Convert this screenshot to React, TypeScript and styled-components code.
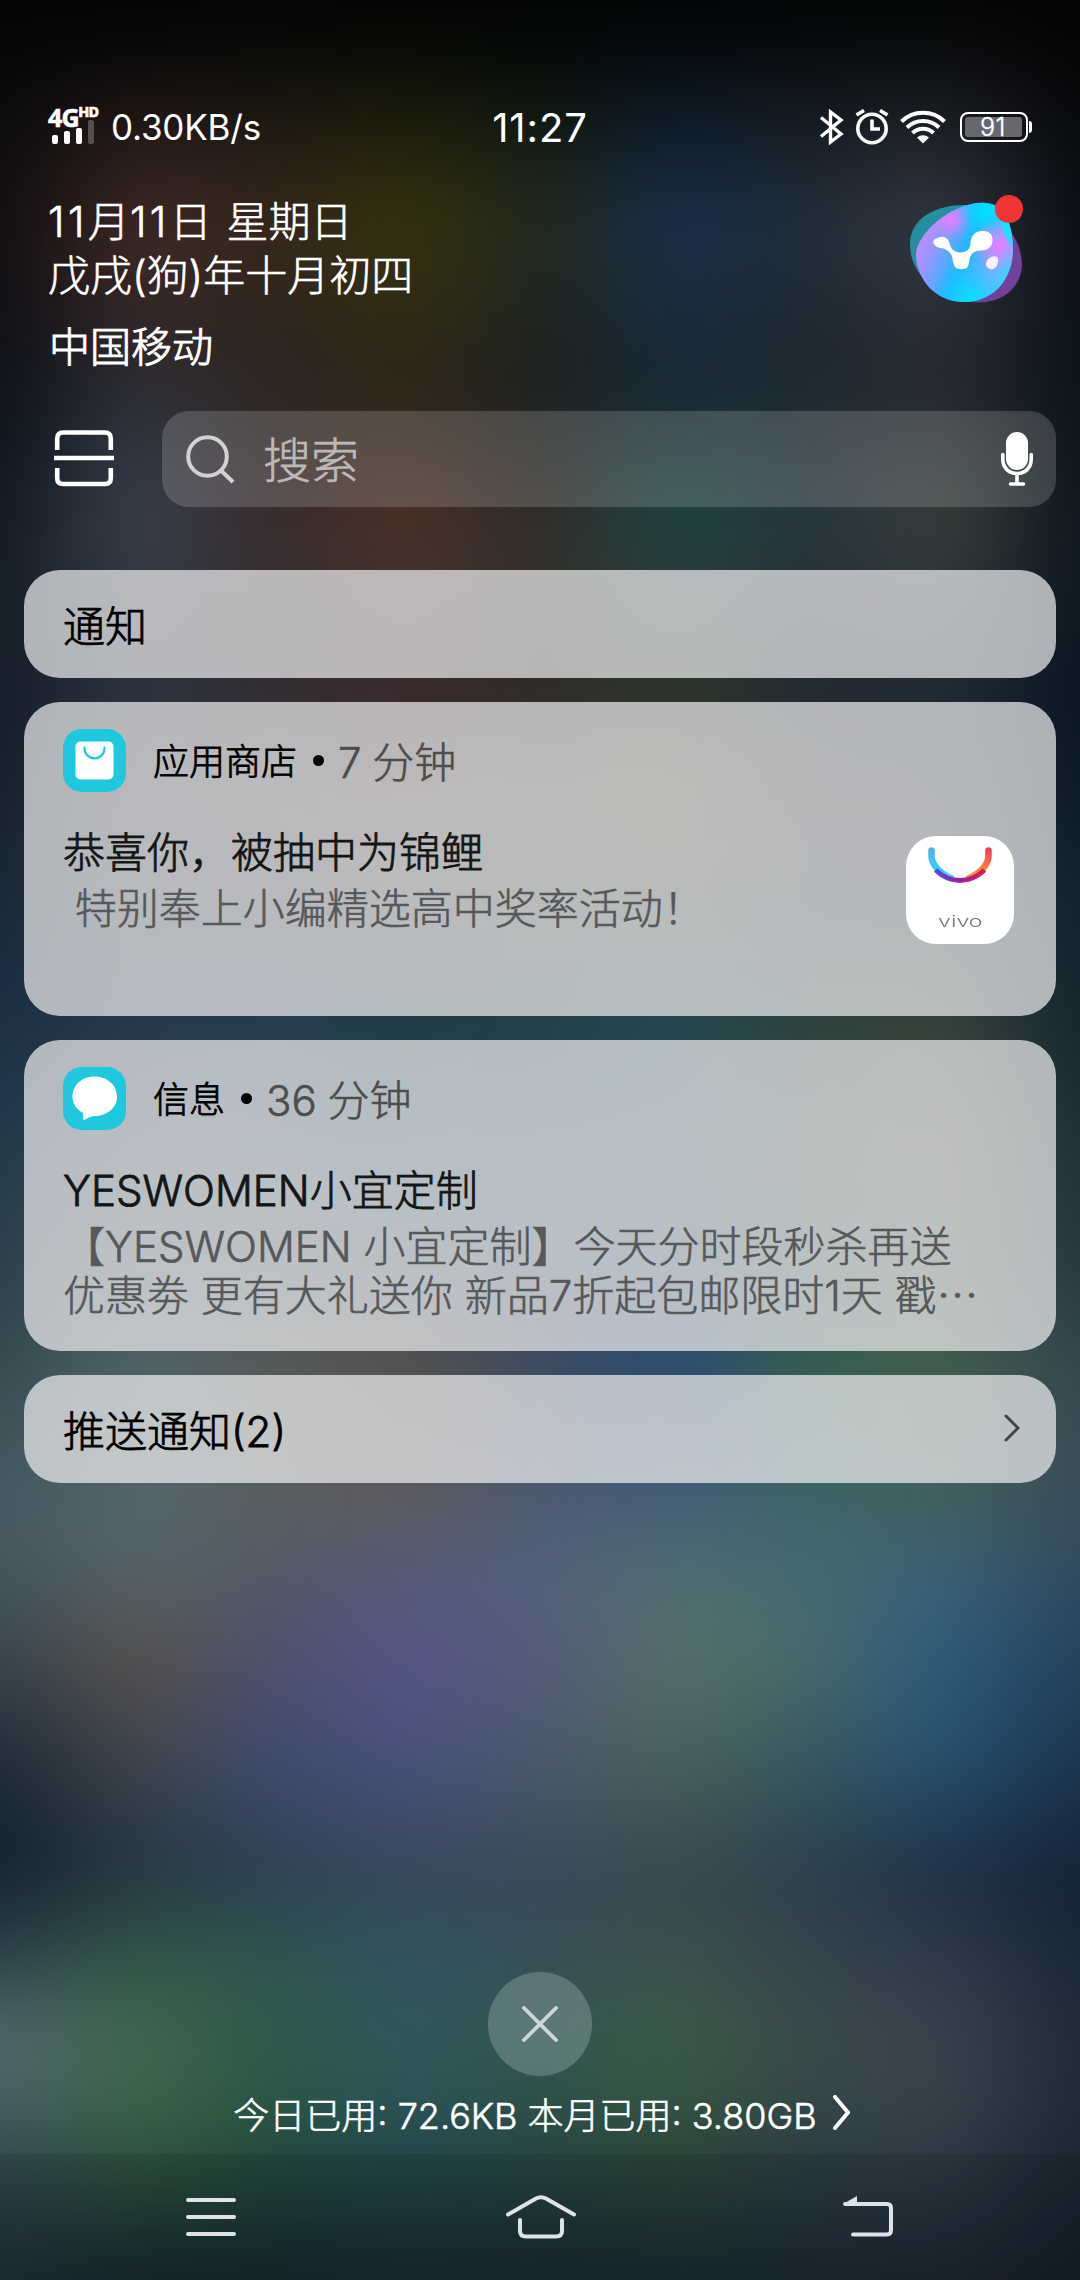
import React from "react";
import styled, { createGlobalStyle, css } from "styled-components";

const Global = createGlobalStyle`
  html, body { margin: 0; padding: 0; background: #10161c; }
  *, *::before, *::after { box-sizing: border-box; }
  svg { display: block; flex: none; }
`;

const Screen = styled.main`
  position: relative;
  width: 1080px;
  height: 2280px;
  overflow: hidden;
  display: flex;
  flex-direction: column;
  font-family: Inter, "Noto Sans CJK SC", sans-serif;
  font-weight: 300;
  -webkit-text-stroke-width: 0.6px;
  color: #fff;
`;

/* Blurred wallpaper: each band holds nine colours and fades in over the band above it. */
const BLEED = 120;
const bands: [number, string][] = [
  [0, "020404 020404 020404 020404 020404 020404 020404 020404 020304"],
  [60, "070707 0a0909 0b0b09 0a0c06 060b09 070c12 0a0d10 0c0e10 040506"],
  [110, "0c0b0c 1f1716 1b1811 1b1c0a 10170f 0b1a28 151a20 1b1d22 07090b"],
  [225, "100e10 422a26 38271d 38350d 232a1f 1a314f 212f3b 383b48 080c12"],
  [330, "0e1016 33282a 2c241d 302a14 1f241f 182b3c 1d2730 2b2e37 0a1018"],
  [400, "0d1219 2d313b 2e2725 2e2518 1f2221 162a35 1e2930 272b31 0b1119"],
  [510, "101923 3b4351 382b2d 503226 302c28 1f4845 263741 3c443e 0c151e"],
  [600, "131d27 333a46 342f31 453330 33302d 2b3e3c 272f35 30363a 0d1721"],
  [690, "121b27 2b3441 2e2a30 38272a 2a2727 2b3327 1f2931 1e2933 091523"],
  [800, "15212d 36393f 3e3a3c 48393a 43403a 46442f 2c3136 2a3037 0c1a27"],
  [900, "182838 303a44 32393f 3c3c3d 3b3f3c 3a4037 2a343b 2c343a 102230"],
  [1025, "1b3042 25394d 223c50 1f3c48 1e3e48 224a56 2e433d 38443c 14252f"],
  [1160, "243a49 384a58 384b58 2c4a56 2c5058 2f4c5a 3a4b48 4c5440 1d2f39"],
  [1270, "2b404c 48545e 44515c 3e4e5c 384a5e 34485c 34504a 44504a 263740"],
  [1362, "34484f 51666a 575b58 57514b 3d4a5e 284a78 36604f 43604e 354750"],
  [1490, "475963 53686e 5a5f60 605b5b 4b5a70 455c78 3d6467 44605c 3a4c5a"],
  [1570, "45565f 55646a 525b66 535a78 53637c 506c72 446a72 3c6278 31495d"],
  [1660, "37454f 59504b 4d516d 56568a 565a7a 55706a 4a6a6c 2c5a7c 24425c"],
  [1770, "1b2836 3c444c 3d4b6c 48507c 485a6a 48605c 36555f 25506f 1c334b"],
  [1870, "13202e 243542 2d4052 37485a 38485a 36484f 2b404c 1f2f45 132337"],
  [1960, "2d434d 345848 2f5550 315260 385058 3c514d 37444e 303a4b 1a2738"],
  [2050, "5a6e75 446b4e 305a4a 315a5e 33564f 3b5e45 3a4b4a 3c4551 202b37"],
  [2140, "374f58 375e40 274f40 264d52 2a4b46 304c3b 314248 333e49 1c2834"],
  [2200, "293e47 244236 1d3c37 1e3c44 213a3b 243d34 263440 283240 172230"],
  [2280, "1a2a34 14232b 15232b 16242e 16242e 172630 18242f 19232f 111b26"],
];

const Wallpaper = styled.div`
  position: absolute;
  inset: -${BLEED}px;
  display: grid;
  grid-template-columns: 1fr;
  grid-template-rows: ${BLEED}px ${bands.slice(1).map(([y], i) => `${y - bands[i][0]}px`).join(" ")} ${BLEED}px;
  filter: blur(36px);
`;

const Band = styled.div<{ $index: number; $fade: number; $colors: string }>`
  grid-column: 1;
  grid-row: ${p => p.$index + 1} / -1;
  background: linear-gradient(90deg, ${p =>
    p.$colors.split(" ").map((c, i) => `#${c} ${BLEED + i * 135}px`).join(", ")});
  mask-image: linear-gradient(180deg, transparent 0, #000 ${p => p.$fade}px);
`;

const Content = styled.div`
  position: relative;
  flex: 1;
  display: flex;
  flex-direction: column;
  min-height: 0;
`;

const row = css`
  display: flex;
  align-items: center;
`;

const StatusBar = styled.header`
  display: grid;
  grid-template-columns: 1fr auto 1fr;
  align-items: center;
  height: 52px;
  margin-top: 101px;
  padding: 0 48px;
`;
const StatusGroup = styled.div<{ $end?: boolean }>`
  ${row}
  justify-content: ${p => (p.$end ? "flex-end" : "flex-start")};
`;
const StatusIcons = styled.div`
  ${row}
  gap: 11px;
`;
const Speed = styled.span`
  margin-left: 11px;
  font-size: 35px;
  font-weight: 400;
  letter-spacing: -0.2px;
  white-space: nowrap;
  -webkit-text-stroke-width: 0;
`;
const Clock = styled.time`
  font-size: 40px;
  font-weight: 400;
  letter-spacing: 0.9px;
  -webkit-text-stroke-width: 0;
`;
const Signal = styled.div`
  display: flex;
  flex-direction: column;
  width: 52px;
  height: 38px;
`;
const Network = styled.div`
  display: flex;
  align-items: flex-start;
  height: 19px;
  font: 700 25px/19px "Open Sans", sans-serif;
  letter-spacing: -0.8px;
`;
const Hd = styled.sup`
  font: 800 13.5px/9px Inter, sans-serif;
  letter-spacing: 0.2px;
`;
const Bars = styled.div`
  display: flex;
  align-items: flex-end;
  gap: 6px;
  margin: -8px 0 0 4px;
  height: 25px;
`;
const Bar = styled.i<{ $h: number; $dim?: boolean }>`
  width: 6px;
  height: ${p => p.$h}px;
  border-radius: 2px;
  background: ${p => (p.$dim ? "#554e4d" : "#fff")};
`;
const BatteryShell = styled.div`
  ${row}
  margin-left: 14px;
`;
const BatteryBody = styled.div`
  width: 68px;
  height: 30px;
  padding: 3px;
  border: 2px solid #fff;
  border-radius: 8px;
`;
const BatteryLevel = styled.div`
  ${row}
  justify-content: center;
  width: 57px;
  height: 20px;
  padding-right: 1px;
  border-radius: 3px;
  background: #66686d;
  font-size: 25px;
  line-height: 20px;
  letter-spacing: 0.6px;
  -webkit-text-stroke-width: 0.4px;
`;
const BatteryTip = styled.i`
  width: 3px;
  height: 12px;
  margin-left: 1px;
  border-radius: 0 3px 3px 0;
  background: #fff;
`;

const Header = styled.section`
  display: flex;
  justify-content: space-between;
  height: 258px;
  padding: 42px 56px 0 48px;
`;
const DateBlock = styled.div`
  display: flex;
  flex-direction: column;
  font-size: 42px;
  line-height: 54px;
  white-space: nowrap;
`;
const DateLine = styled.span`
  word-spacing: 3px;
`;
const Digits = styled.span`
  letter-spacing: 3.4px;
`;
const Carrier = styled.span`
  margin-top: 17px;
  padding-left: 1px;
  font-size: 41px;
  -webkit-text-stroke-width: 1px;
`;
const Assistant = styled.div`
  position: relative;
  width: 116px;
  height: 112px;
`;
const Dot = styled.i`
  position: absolute;
  right: 1px;
  top: 0;
  width: 28px;
  height: 28px;
  border-radius: 50%;
  background: #f13434;
`;

const SearchRow = styled.section`
  ${row}
  height: 96px;
  padding: 0 24px 0 54px;
  gap: 48px;
`;
const SearchBox = styled.div`
  ${row}
  flex: 1;
  height: 96px;
  padding: 0 23px 0 24px;
  border-radius: 27px;
  background: rgba(255, 255, 255, 0.17);
`;
const Placeholder = styled.span`
  flex: 1;
  margin: 4px 0 0 28px;
  font-size: 48px;
  line-height: 60px;
  color: #bcbab8;
`;

const List = styled.section`
  display: flex;
  flex-direction: column;
  gap: 24px;
  padding: 63px 24px 0;
`;
const Card = styled.article<{ $height: number }>`
  height: ${p => p.$height}px;
  padding: 0 39px;
  border-radius: 36px;
  background: rgba(240, 240, 241, 0.71);
  color: #000;
  font-size: 42px;
  white-space: nowrap;
`;
const StripCard = styled(Card)`
  ${row}
  justify-content: space-between;
  padding-right: 36px;
  padding-bottom: 2px;
  -webkit-text-stroke-width: 0.8px;
`;
const CardHead = styled.div`
  ${row}
  height: 63px;
  margin-top: 27px;
`;
const AppName = styled.span`
  margin: -3px 0 0 27px;
  font-size: 36px;
  -webkit-text-stroke-width: 0.8px;
`;
const Bullet = styled.i`
  width: 11px;
  height: 11px;
  margin: 0 14px 0 16px;
  border-radius: 50%;
  background: #000;
`;
const Age = styled.span`
  margin-top: -3px;
  color: #4c4d4e;
  word-spacing: -1px;
`;
const CardBody = styled.div`
  display: flex;
  justify-content: space-between;
  margin-top: 33px;
`;
const CardTitle = styled.h2`
  margin: 0;
  font-size: 42px;
  line-height: 56px;
  font-weight: 300;
  color: #141616;
  -webkit-text-stroke-width: 0.8px;
`;
const CardText = styled.p`
  margin: 3px 0 0;
  line-height: 49px;
  color: #56585a;
  white-space: pre;
`;
const StoreBadge = styled.div`
  width: 108px;
  height: 108px;
  margin: 11px 3px 0 0;
  display: flex;
  flex-direction: column;
  align-items: center;
  border-radius: 30px;
  background: #fff;
`;
const StoreWord = styled.span`
  margin-top: 27px;
  font: 300 16px/20px Inter, sans-serif;
  color: #777;
  transform: scaleX(1.45);
  -webkit-text-stroke-width: 0;
`;

const Footer = styled.footer`
  margin-top: auto;
  display: flex;
  flex-direction: column;
  align-items: center;
`;
const CloseButton = styled.button`
  display: grid;
  place-items: center;
  width: 104px;
  height: 104px;
  padding: 0;
  border: 0;
  border-radius: 50%;
  background: rgba(200, 215, 220, 0.27);
`;
const Usage = styled.div`
  ${row}
  height: 78px;
  gap: 16px;
  padding: 0 0 5px 3px;
  font-size: 36px;
  white-space: nowrap;
`;
const NavBar = styled.nav`
  display: grid;
  grid-template-columns: 331px 329px 326px;
  place-items: center;
  width: 1080px;
  height: 126px;
  padding-left: 45px;
  background: rgba(8, 14, 20, 0.12);
`;

const Bluetooth = () => (
  <svg width="25" height="36" viewBox="0 0 25 36" fill="none" stroke="#fff" strokeWidth="3.4">
    <path d="M2 8.5 22 25 11.5 33V3L22 11 2 27.5" />
  </svg>
);
const Alarm = () => (
  <svg width="34" height="36" viewBox="0 0 34 36" fill="none" stroke="#fff" strokeWidth="3.6">
    <circle cx="17" cy="19.5" r="14.2" />
    <path d="M17 10.5V20h8M1.5 6 9 1.5M32.5 6 25 1.5" />
  </svg>
);
const Wifi = () => (
  <svg width="46" height="34" viewBox="0 0 46 34" fill="none" stroke="#fff" strokeWidth="4">
    <path d="M1.5 11.5a31 31 0 0 1 43 0M7 17.5a23 23 0 0 1 32 0M12.5 23a15 15 0 0 1 21 0" />
    <path d="M17 27.5q6-4.5 12 0L23 33.5Z" fill="#fff" stroke="none" />
  </svg>
);
const AssistantFace = () => (
  <svg width="116" height="112" viewBox="2 0 116 112">
    <defs>
      <linearGradient id="face" x1="0" y1="0.35" x2="1" y2="0.75">
        <stop offset="0" stopColor="#f07cff" />
        <stop offset="0.22" stopColor="#a094ff" />
        <stop offset="0.5" stopColor="#20b8ff" />
        <stop offset="0.75" stopColor="#7fb0ff" />
        <stop offset="1" stopColor="#08eeff" />
      </linearGradient>
      <radialGradient id="glow"><stop offset="0" stopColor="#e87dff" /><stop offset="1" stopColor="#e87dff" stopOpacity="0" /></radialGradient>
      <radialGradient id="aqua"><stop offset="0" stopColor="#00e4ff" /><stop offset="1" stopColor="#00d0ff" stopOpacity="0" /></radialGradient>
      <clipPath id="blob"><path d="M80 8C99 9 107 30 107 54C107 86 86 107 58 107C29 107 11 84 10 61C9 39 48 5 80 8Z" /></clipPath>
    </defs>
    <path d="M62 10C32 9 4 22 4 49C4 72 18 89 40 98L76 22Z" fill="#258f9f" />
    <path d="M100 32C111 41 116 58 116 71C114 95 94 110 66 107Z" fill="#71429a" />
    <g clipPath="url(#blob)">
      <rect width="116" height="112" fill="url(#face)" />
      <circle cx="80" cy="16" r="34" fill="url(#aqua)" />
      <circle cx="45" cy="25" r="20" fill="url(#glow)" />
      <circle cx="92" cy="50" r="26" fill="url(#glow)" />
      <circle cx="66" cy="105" r="38" fill="url(#aqua)" />
      <path d="M94 20Q98 46 108 52V20Z" fill="#00f0ff" opacity="0.8" />
    </g>
    <path transform="translate(0.5 1)" d="M31 42c5-3 11 0 12 5 .5 5 5 9.500 11 9.500 6 0 10-4 10-9 0-6 3-12 11-12.500 9-.5 11 4 11 9.500 0 6-5 10-11 10-7 0-11 3-12 9-.5 4-1 7-3 8.500-2 1.500-8.500 1.500-10.500 0-2.500-2-3-6-3.500-9.500-1-5-4-8-9-10-4-.5-7-1-9-3.500-2.500-3-1-6 3-7Z" fill="#fff" />
    <path d="M85 62c5-2 8 0 7 5-1 6-5 8-8 7-6-2-5-9 1-12Z" fill="#f7efff" />
  </svg>
);
const ScanIcon = () => (
  <svg width="60" height="58" viewBox="0 0 60 58" fill="none" stroke="#fff" strokeWidth="4.6">
    <path d="M3.2 20V9Q3.2 2.5 9 2.5H51Q56.8 2.5 56.8 9V20M3.2 38V48Q3.2 54 9 54H51Q56.8 54 56.8 48V38M0 28H60" />
  </svg>
);
const SearchIcon = () => (
  <svg width="49" height="49" viewBox="0 0 49 49" fill="none" stroke="#d3d2d2" strokeWidth="4">
    <circle cx="21.5" cy="21.5" r="19.3" />
    <path d="M35 35.5 47 47" />
  </svg>
);
const MicIcon = () => (
  <svg width="32" height="54" viewBox="0 0 32 54">
    <rect x="5" y="0" width="22" height="38" rx="11" fill="#fff" />
    <path d="M1.8 22.5V27C1.8 36 8 41.5 16 41.5S30.2 36 30.2 27V22.5M16 42V51M9.5 52H22.5" fill="none" stroke="#fff" strokeWidth="3.6" strokeLinecap="round" />
  </svg>
);
const StoreIcon = () => (
  <svg width="63" height="63" viewBox="0 0 63 63">
    <rect width="63" height="63" rx="19" fill="#1fc8dc" />
    <rect x="12.5" y="12.5" width="38" height="38" rx="5" fill="#fff" />
    <path d="M21.5 18.5C21.5 33 41.5 33 41.5 18.5" fill="none" stroke="#1fc8dc" strokeWidth="2.2" strokeLinecap="round" />
  </svg>
);
const MessageIcon = () => (
  <svg width="63" height="63" viewBox="0 0 63 63">
    <rect width="63" height="63" rx="19" fill="#1fc8dc" />
    <path d="M31.5 9.5C44 9.5 54 18 54 29.5S44 49 31.5 49C28 49 24 51.5 20.5 53.5L20 46C13.5 42.5 9.5 37 9.5 29.5C9.5 18 19 9.5 31.5 9.5Z" fill="#fff" />
  </svg>
);
const BagHandle = () => (
  <svg width="66" height="48" viewBox="0 0 66 48" fill="none" strokeWidth="6.5">
    <defs>
      <linearGradient id="cool" x1="0" y1="0" x2="0" y2="1"><stop offset="0" stopColor="#49b3ee" /><stop offset="1" stopColor="#38d8ff" /></linearGradient>
      <linearGradient id="warm" x1="0" y1="0" x2="0" y2="1"><stop offset="0" stopColor="#ee434f" /><stop offset="1" stopColor="#ffa02e" /></linearGradient>
      <linearGradient id="base" x1="0" y1="0" x2="1" y2="0"><stop offset="0" stopColor="#5050dc" /><stop offset="0.5" stopColor="#a020a4" /><stop offset="1" stopColor="#e01850" /></linearGradient>
    </defs>
    <path d="M4.5 14.5V20C4.5 28 12 37 24 42" stroke="url(#cool)" strokeLinecap="round" />
    <path d="M61.5 14.5V20C61.5 28 54 37 42 42" stroke="url(#warm)" strokeLinecap="round" />
    <path d="M8.5 34C16 41 24 44.5 33 44.5S50 41 57.5 34" stroke="url(#base)" strokeWidth="5" />
  </svg>
);
const Chevron = ({ w, h, color, stroke }: { w: number; h: number; color: string; stroke: number }) => (
  <svg width={w} height={h} viewBox={`0 0 ${w} ${h}`} fill="none" stroke={color} strokeWidth={stroke} strokeLinecap="round">
    <path d={`M2 2 ${w - 2} ${h / 2} 2 ${h - 2}`} />
  </svg>
);
const CloseIcon = () => (
  <svg width="36" height="36" viewBox="0 0 36 36" stroke="#ced7d8" strokeWidth="3.8" strokeLinecap="round">
    <path d="M2 2 34 34M34 2 2 34" />
  </svg>
);
const MenuIcon = () => (
  <svg width="50" height="42" viewBox="0 0 50 42" stroke="#dfe3e5" strokeWidth="4" strokeLinecap="round">
    <path d="M2 4H48M2 21H48M2 38H48" />
  </svg>
);
const HomeIcon = () => (
  <svg width="70" height="44" viewBox="0 0 70 44" fill="none" stroke="#dfe3e5" strokeWidth="4" strokeLinecap="round">
    <path d="M2 19.5 30 3.5Q35 .8 40 3.5L68 19.5M14 25V36Q14 41.5 20 41.5H50Q56 41.5 56 36V25" />
  </svg>
);
const BackIcon = () => (
  <svg width="52" height="42" viewBox="0 0 52 42" fill="none" stroke="#dfe3e5" strokeWidth="4" strokeLinecap="round">
    <path d="M3 8H45Q49 8 49 12V34Q49 38.5 45 38.5H11" />
    <path d="M1 8 15 0V8Z" fill="#dfe3e5" stroke="none" />
  </svg>
);

export default function App() {
  return (
    <>
      <Global />
      <Screen>
        <Wallpaper>
          {bands.map(([y, colors], i) => (
            <Band key={y} $index={i} $colors={colors} $fade={i === 0 ? 1 : y - bands[i - 1][0]} />
          ))}
        </Wallpaper>
        <Content>
          <StatusBar>
            <StatusGroup>
              <Signal>
                <Network>4G<Hd>HD</Hd></Network>
                <Bars><Bar $h={9} /><Bar $h={13} /><Bar $h={16} /><Bar $h={24} $dim /></Bars>
              </Signal>
              <Speed>0.30KB/s</Speed>
            </StatusGroup>
            <Clock>11:27</Clock>
            <StatusGroup $end>
              <StatusIcons><Bluetooth /><Alarm /><Wifi /></StatusIcons>
              <BatteryShell>
                <BatteryBody><BatteryLevel>91</BatteryLevel></BatteryBody>
                <BatteryTip />
              </BatteryShell>
            </StatusGroup>
          </StatusBar>

          <Header>
            <DateBlock>
              <DateLine><Digits>11</Digits>月<Digits>11</Digits>日 星期日</DateLine>
              <DateLine>戊戌(狗)年十月初四</DateLine>
              <Carrier>中国移动</Carrier>
            </DateBlock>
            <Assistant><AssistantFace /><Dot /></Assistant>
          </Header>

          <SearchRow>
            <ScanIcon />
            <SearchBox>
              <SearchIcon />
              <Placeholder>搜索</Placeholder>
              <MicIcon />
            </SearchBox>
          </SearchRow>

          <List>
            <StripCard $height={108}>通知</StripCard>
            <Card $height={314}>
              <CardHead>
                <StoreIcon />
                <AppName>应用商店</AppName><Bullet /><Age>7 分钟</Age>
              </CardHead>
              <CardBody>
                <div>
                  <CardTitle>恭喜你，被抽中为锦鲤</CardTitle>
                  <CardText>{" 特别奉上小编精选高中奖率活动！"}</CardText>
                </div>
                <StoreBadge><BagHandle /><StoreWord>vivo</StoreWord></StoreBadge>
              </CardBody>
            </Card>
            <Card $height={311}>
              <CardHead>
                <MessageIcon />
                <AppName>信息</AppName><Bullet /><Age>36 分钟</Age>
              </CardHead>
              <CardBody>
                <div>
                  <CardTitle>YESWOMEN小宜定制</CardTitle>
                  <CardText>{"【YESWOMEN 小宜定制】今天分时段秒杀再送\n优惠劵 更有大礼送你 新品7折起包邮限时1天 戳⋯"}</CardText>
                </div>
              </CardBody>
            </Card>
            <StripCard $height={108}>
              <span>推送通知(2)</span>
              <Chevron w={16} h={28} color="#444" stroke={3} />
            </StripCard>
          </List>

          <Footer>
            <CloseButton aria-label="关闭"><CloseIcon /></CloseButton>
            <Usage>
              <span>今日已用: 72.6KB 本月已用: 3.80GB</span>
              <Chevron w={17} h={35} color="#fff" stroke={4} />
            </Usage>
            <NavBar><MenuIcon /><HomeIcon /><BackIcon /></NavBar>
          </Footer>
        </Content>
      </Screen>
    </>
  );
}
